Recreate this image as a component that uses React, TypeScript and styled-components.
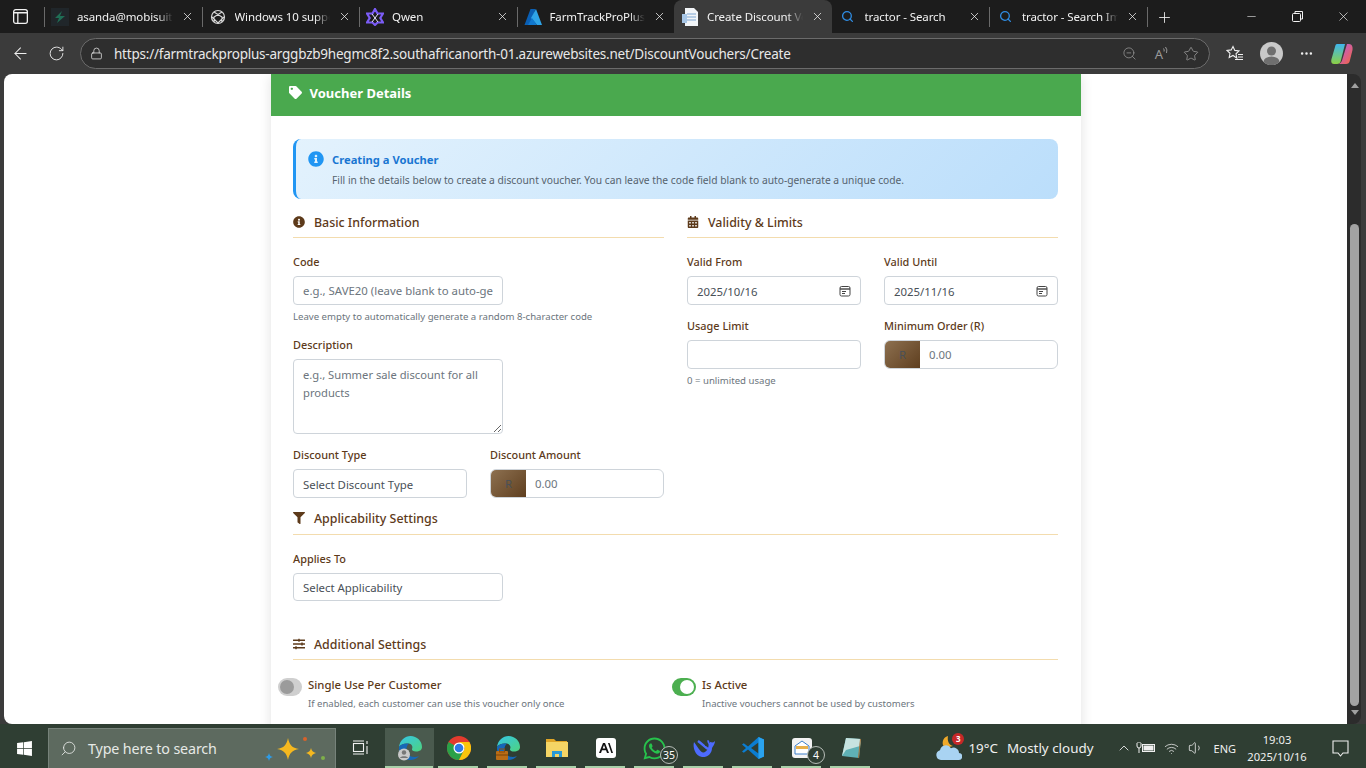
import React from 'react';
import styled, { createGlobalStyle } from 'styled-components';
import {
  FaTag,
  FaInfoCircle,
  FaCalendarAlt,
  FaFilter,
  FaSlidersH,
  FaWhatsapp,
  FaWindows,
} from 'react-icons/fa';
import {
  ArrowLeft,
  RotateCw,
  Lock,
  ZoomOut,
  Star,
  X,
  Plus,
  Minus,
  Search,
  ChevronUp,
  Wifi,
  Volume1,
  MoreHorizontal,
} from 'lucide-react';

const FONT = '"Noto Sans", "Open Sans", sans-serif';
const BROWN = '#5d3a1a';

const GlobalStyle = createGlobalStyle`
  html, body {
    margin: 0;
    padding: 0;
    width: 100%;
    height: 100%;
    overflow: hidden;
    background: #3b3b3b;
    font-family: ${FONT};
  }
  * { box-sizing: border-box; }
  input::placeholder, textarea::placeholder { color: #6c757d; opacity: 1; }
`;

const Screen = styled.div`
  width: 1366px;
  height: 768px;
  display: flex;
  flex-direction: column;
  overflow: hidden;
`;

/* ---- browser tabs ---- */

const TabStrip = styled.div`
  height: 33px;
  flex: none;
  display: flex;
  align-items: stretch;
  background: #1c1c1c;
  color: #f2f2f2;
`;

const SidebarButton = styled.div`
  width: 44px;
  padding-right: 4px;
  display: flex;
  align-items: center;
  justify-content: center;
`;

const Tab = styled.div<{ $active?: boolean; $sep?: boolean }>`
  width: 157.5px;
  display: flex;
  align-items: center;
  padding: 0 8px 0 7px;
  gap: 8px;
  font-size: 11.5px;
  letter-spacing: -0.1px;
  position: relative;
  background: ${(p) => (p.$active ? '#3b3b3b' : 'transparent')};
  border-radius: ${(p) => (p.$active ? '8px 8px 0 0' : '0')};
  &::before {
    content: '';
    display: ${(p) => (p.$sep ? 'block' : 'none')};
    position: absolute;
    left: 0;
    top: 7px;
    bottom: 6px;
    width: 1px;
    background: #6a6a6a;
  }
`;

const TabFavicon = styled.span`
  width: 18px;
  height: 18px;
  flex: none;
  display: flex;
  align-items: center;
  justify-content: center;
`;

const TabTitle = styled.span`
  flex: 1;
  min-width: 0;
  white-space: nowrap;
  overflow: hidden;
  -webkit-mask-image: linear-gradient(90deg, #000 84%, transparent 100%);
  mask-image: linear-gradient(90deg, #000 84%, transparent 100%);
`;

const NewTab = styled.div`
  width: 34px;
  display: flex;
  align-items: center;
  justify-content: center;
  border-left: 1px solid #6a6a6a;
  margin: 7px 0 6px;
`;

const WindowButtons = styled.div`
  margin-left: auto;
  display: flex;
  align-items: center;
`;

const WindowButton = styled.div`
  width: 46px;
  height: 33px;
  display: flex;
  align-items: center;
  justify-content: center;
`;

/* ---- address bar ---- */

const Toolbar = styled.div`
  height: 41px;
  flex: none;
  display: flex;
  align-items: center;
  background: #3b3b3b;
  color: #efefef;
  padding-left: 2px;
`;

const NavButton = styled.div`
  width: 36px;
  height: 32px;
  display: flex;
  align-items: center;
  justify-content: center;
  flex: none;
`;

const AddressBox = styled.div`
  width: 1130px;
  height: 31px;
  margin-left: 6px;
  flex: none;
  border: 1px solid #6b6b6b;
  border-radius: 16px;
  background: #2e2e2e;
  display: flex;
  align-items: center;
  padding: 0 10px 0 9px;
  font-size: 13.5px;
  letter-spacing: -0.225px;
  color: #e8e8e8;
`;

const Url = styled.span`
  margin-left: 11px;
  flex: 1;
  white-space: nowrap;
`;

const AddressTools = styled.div`
  display: flex;
  align-items: center;
  gap: 14px;
  color: #9a9a9a;
`;

const ReadAloud = styled.span`
  display: flex;
  align-items: flex-start;
  margin-left: 4px;
  font-size: 13px;
  line-height: 16px;
  letter-spacing: 0;
`;

const Avatar = styled.div`
  width: 23px;
  height: 23px;
  border-radius: 50%;
  background: #c9c9c9;
  overflow: hidden;
  display: flex;
  align-items: center;
  justify-content: center;
`;

const ToolbarRight = styled.div`
  display: flex;
  align-items: center;
  gap: 16px;
  margin-left: 16px;
`;

/* ---- page ---- */

const Middle = styled.div`
  flex: 1;
  min-height: 0;
  display: flex;
  background: #3b3b3b;
  padding-left: 4px;
`;

const Viewport = styled.div`
  width: 1343px;
  background: #fff;
  border-radius: 8px 0 0 8px;
  overflow: hidden;
  display: flex;
  justify-content: center;
`;

const ScrollTrack = styled.div`
  width: 14px;
  background: #2c2c2c;
  border-radius: 0 8px 8px 0;
  display: flex;
  flex-direction: column;
  align-items: center;
  padding: 9px 0 0 1px;
`;

const ScrollArrow = styled.div<{ $down?: boolean }>`
  width: 0;
  height: 0;
  flex: none;
  border-left: 4.5px solid transparent;
  border-right: 4.5px solid transparent;
  ${(p) => (p.$down ? 'border-top: 5px solid #a0a0a0;' : 'border-bottom: 5px solid #a0a0a0;')}
`;

const ScrollThumb = styled.div`
  width: 9px;
  height: 482px;
  margin: 136px 0 4px;
  flex: none;
  border-radius: 5px;
  background: #a3a3a3;
`;

const Card = styled.div`
  width: 810px;
  flex: none;
  align-self: flex-start;
  background: #fff;
  box-shadow: 0 2px 12px rgba(0, 0, 0, 0.12);
`;

const CardHeader = styled.div`
  height: 42px;
  background: #4aa94e;
  color: #fff;
  display: flex;
  align-items: center;
  gap: 8px;
  padding: 0 0 5px 18px;
  font-size: 13px;
  font-weight: 700;
`;

const CardBody = styled.div`
  padding: 23px 22.5px 60px 22.5px;
`;

const Alert = styled.div`
  height: 60px;
  border-left: 3px solid #2196f3;
  border-radius: 8px;
  background: linear-gradient(135deg, #e3f2fd, #bbdefb);
  display: flex;
  gap: 8px;
  padding: 12px 12px;
  color: #2196f3;
`;

const AlertTitle = styled.div`
  font-size: 11.2px;
  font-weight: 700;
  color: #1976d2;
  line-height: 17px;
  margin-bottom: 5px;
`;

const AlertText = styled.div`
  font-size: 10.25px;
  color: #56636e;
  line-height: 15px;
`;

const Columns = styled.div`
  display: grid;
  grid-template-columns: 371px 371px;
  column-gap: 23px;
`;

const SectionHead = styled.div<{ $pad?: number }>`
  height: 29px;
  display: flex;
  align-items: center;
  gap: 9px;
  border-bottom: 1px solid #f3dcae;
  color: ${BROWN};
  font-size: 12.4px;
  font-weight: 500;
  padding-bottom: ${(p) => p.$pad ?? 2}px;
`;

const Section = styled.div<{ $top: number }>`
  margin-top: ${(p) => p.$top}px;
`;

const Fields = styled.div`
  padding-top: 16px;
`;

const Row = styled.div`
  display: grid;
  grid-template-columns: 174px 174px;
  column-gap: 23px;
`;

const Field = styled.div<{ $bottom?: number }>`
  margin-bottom: ${(p) => p.$bottom ?? 0}px;
`;

const Label = styled.div`
  font-size: 10.9px;
  font-weight: 500;
  color: ${BROWN};
  line-height: 16px;
  height: 16px;
  margin-bottom: 6px;
`;

const TextInput = styled.input<{ $w?: number }>`
  display: block;
  width: ${(p) => (p.$w ? `${p.$w}px` : '100%')};
  height: 29px;
  border: 1px solid #ced4da;
  border-radius: 4px;
  background: #fff;
  padding: 0 9px;
  font-family: ${FONT};
  font-size: 11.4px;
  color: #495057;
  outline: none;
`;

const FakeInput = styled.div<{ $w?: number; $h?: number }>`
  width: ${(p) => (p.$w ? `${p.$w}px` : '100%')};
  height: ${(p) => p.$h ?? 29}px;
  border: 1px solid #ced4da;
  border-radius: 4px;
  background: #fff;
  padding: 1px 9px 0;
  font-size: 11.4px;
  color: #495057;
  display: flex;
  align-items: center;
  justify-content: space-between;
`;

const TextArea = styled.textarea`
  display: block;
  width: 210px;
  height: 75px;
  border: 1px solid #ced4da;
  border-radius: 4px;
  padding: 6px 9px;
  font-family: ${FONT};
  font-size: 11.2px;
  line-height: 18px;
  color: #495057;
  outline: none;
`;

const Help = styled.div`
  font-size: 9.6px;
  color: #6c757d;
  line-height: 13px;
  margin-top: 5px;
`;

const InputGroup = styled.div`
  display: flex;
  height: 29px;
  border: 1px solid #ced4da;
  border-radius: 6px;
  overflow: hidden;
  background: #fff;
`;

const Addon = styled.div`
  width: 35px;
  flex: none;
  background: linear-gradient(135deg, #8d7050, #5f3f1f);
  color: #495057;
  display: flex;
  align-items: center;
  justify-content: center;
  font-size: 11.4px;
`;

const AddonValue = styled.div`
  padding: 0 0 1px 9px;
  display: flex;
  align-items: center;
  font-size: 11.4px;
  color: #6c757d;
`;

const SwitchRow = styled.div`
  display: flex;
  gap: 6px;
  margin-left: -15px;
`;

const SwitchTrack = styled.div<{ $on?: boolean }>`
  width: 24px;
  height: 18px;
  flex: none;
  margin-top: 1px;
  border-radius: 9px;
  background: ${(p) => (p.$on ? '#4caf50' : '#cfcfcf')};
  display: flex;
  align-items: center;
  justify-content: ${(p) => (p.$on ? 'flex-end' : 'flex-start')};
  padding: 0 2px;
`;

const SwitchKnob = styled.div<{ $on?: boolean }>`
  width: 14px;
  height: 14px;
  border-radius: 50%;
  background: ${(p) => (p.$on ? '#fff' : '#9b9b9b')};
`;

const SwitchTitle = styled.div`
  font-size: 11.35px;
  font-weight: 500;
  color: ${BROWN};
  line-height: 16px;
  margin-bottom: 4px;
`;

const SwitchHelp = styled.div`
  font-size: 9.55px;
  color: #6c757d;
  line-height: 13px;
`;

/* ---- taskbar ---- */

const Taskbar = styled.div`
  height: 44px;
  flex: none;
  background: #2f3e33;
  display: flex;
  align-items: stretch;
  color: #f0f0f0;
`;

const StartButton = styled.div`
  width: 48px;
  padding-top: 4px;
  display: flex;
  align-items: center;
  justify-content: center;
`;

const SearchBox = styled.div`
  width: 288px;
  margin-top: 4px;
  background: #5d6a5f;
  border: 1px solid #76827a;
  border-bottom: none;
  display: flex;
  align-items: center;
  padding: 0 5px 0 11px;
  font-size: 14.3px;
  letter-spacing: -0.15px;
  color: #e6e9e6;
`;

const SearchText = styled.span`
  margin-left: 11px;
  flex: 1;
  white-space: nowrap;
`;

const TaskItem = styled.div<{ $active?: boolean; $open?: boolean }>`
  width: 49px;
  margin-top: 4px;
  display: flex;
  align-items: center;
  justify-content: center;
  position: relative;
  background: ${(p) => (p.$active ? '#4a5a4e' : 'transparent')};
  &::after {
    content: '';
    display: ${(p) => (p.$open ? 'block' : 'none')};
    position: absolute;
    bottom: 0;
    left: ${(p) => (p.$active ? 0 : 4)}px;
    right: ${(p) => (p.$active ? 1 : 5)}px;
    height: 2px;
    background: #a9d0a9;
  }
`;

const CountBadge = styled.span`
  position: absolute;
  right: 1px;
  bottom: 4px;
  width: 18px;
  height: 18px;
  border-radius: 50%;
  border: 1px solid #b7bdb8;
  background: #2f3e33;
  color: #fff;
  font-size: 10.5px;
  line-height: 16px;
  text-align: center;
`;

const Tray = styled.div`
  margin-left: auto;
  display: flex;
  align-items: center;
  padding-top: 4px;
`;

const WeatherWrap = styled.div`
  width: 26px;
  height: 26px;
  position: relative;
`;

const WeatherBadge = styled.span`
  position: absolute;
  right: -2px;
  top: -2px;
  width: 12px;
  height: 12px;
  border-radius: 50%;
  background: #c62828;
  color: #fff;
  font-size: 8px;
  font-weight: 700;
  line-height: 12px;
  text-align: center;
`;

const TrayText = styled.span<{ $ml: number; $size?: number }>`
  margin-left: ${(p) => p.$ml}px;
  font-size: ${(p) => p.$size ?? 13.4}px;
  white-space: nowrap;
`;

const TrayIcon = styled.div<{ $ml: number }>`
  margin-left: ${(p) => p.$ml}px;
  display: flex;
  align-items: center;
`;

const Clock = styled.div`
  width: 74px;
  margin-left: 4px;
  text-align: center;
  font-size: 11.2px;
  line-height: 17px;
`;

const Notify = styled.div`
  width: 52px;
  display: flex;
  justify-content: center;
`;

/* ---- drawn logos ---- */

const EdgeLogo = ({ badge }: { badge?: 'user' | 'work' }) => (
  <svg width="26" height="26" viewBox="0 0 26 26">
    <defs>
      <linearGradient id="edgeA" x1="0" y1="0" x2="1" y2="1">
        <stop offset="0" stopColor="#34c6e8" />
        <stop offset="1" stopColor="#4ed37e" />
      </linearGradient>
    </defs>
    <path d="M2 12C3 5 8 1 13.5 1 20 1 25 6 25 12c0 3-2.500 4.500-6 4.500-2.500 0-4.500-1-4-2.500 1-1.500.5-5-3.500-5.500C7 8 3.500 9.500 2 12z" fill="url(#edgeA)" />
    <path d="M2 12c-.5 7 4.500 13 11 13 4 0 7-1.500 9-4-3 1.500-8 1.500-10.500-1.500C8.500 16 9 11 12 8.500 7 8 3.500 9.500 2 12z" fill="#1668b8" />
    {badge === 'user' && (
      <g>
        <circle cx="7" cy="19.500" r="6" fill="#c9c9c9" />
        <circle cx="7" cy="17.500" r="2.200" fill="#777" />
        <path d="M3 23c.5-2.500 7.500-2.500 8 0z" fill="#777" />
      </g>
    )}
    {badge === 'work' && (
      <g>
        <rect x="1" y="16" width="12" height="9" rx="1" fill="#b96d17" />
        <rect x="4.500" y="14" width="5" height="3" fill="none" stroke="#8a4f0e" />
        <rect x="1" y="19.500" width="12" height="1" fill="#7a4408" />
      </g>
    )}
  </svg>
);

const ChromeLogo = () => (
  <svg width="24" height="24" viewBox="0 0 24 24">
    <circle cx="12" cy="12" r="12" fill="#e33b2e" />
    <path d="M12 12L1.600 6A12 12 0 0 0 12 24l6-12z" fill="#2aa148" />
    <path d="M12 24A12 12 0 0 0 22.400 6H12l6 6z" fill="#fbc50c" />
    <circle cx="12" cy="12" r="5.500" fill="#fff" />
    <circle cx="12" cy="12" r="4.300" fill="#2f79e8" />
  </svg>
);

const FolderLogo = () => (
  <svg width="22" height="20" viewBox="0 0 22 20">
    <path d="M0 1h8l2 2h11v3H0z" fill="#e0a526" />
    <rect y="4" width="22" height="15" fill="#f5d565" />
    <path d="M6 19v-6h10v6h-3v-3H9v3z" fill="#2a9ad6" />
  </svg>
);

const ClaudeLike = () => (
  <svg width="20" height="20" viewBox="0 0 20 20">
    <rect width="20" height="20" rx="3" fill="#fff" />
    <path d="M3 15L7 5h2l4 10h-2l-1-2.800H6L5 15zM6.700 10.500h2.600L8 7zM12 5h1.600l3.400 10h-1.700z" fill="#111" />
  </svg>
);

const WhaleLogo = () => (
  <svg width="24" height="22" viewBox="0 0 24 22">
    <path
      d="M23 4c-1 1-2 1.500-3 1.500-1-1-2-.5-3 .5 1-2-.5-3-1.500-3-.5 1 0 3 1 4 .5 4-2 8-5 8.500C9 16 5 9 2 5 .5 10 3 19 10 20c5 .5 10-3 10-9 1-2 3-4 3-7z"
      fill="#4d6bfe"
    />
    <path d="M6 4c3 2 8 7 10 8" stroke="#4d6bfe" strokeWidth="2.500" fill="none" />
    <circle cx="14" cy="8" r="1" fill="#2f3e33" />
  </svg>
);

const VsCodeLogo = () => (
  <svg width="24" height="24" viewBox="0 0 24 24">
    <path d="M17.500 1L23 3.500v17L17.500 23 7 13.500 2.800 16.700 1 15.500 5 12 1 8.500l1.800-1.200L7 10.500z" fill="#0b7dd1" />
    <path d="M17.500 6.500L10 12l7.500 5.500z" fill="#2f3e33" />
    <path d="M17.500 1L23 3.500v17L17.500 23z" fill="#2aa3ef" />
  </svg>
);

const MailLogo = () => (
  <svg width="20" height="20" viewBox="0 0 20 20">
    <rect width="20" height="20" rx="3" fill="#f3f3f3" />
    <path d="M3 8l7-5 7 5v8H3z" fill="#fff" stroke="#3c7fc9" />
    <rect x="4" y="8" width="12" height="3" fill="#e8b04a" />
  </svg>
);

const NotepadLogo = () => (
  <svg width="24" height="24" viewBox="0 0 24 24">
    <path d="M7 2l15 1-2 19L3 20z" fill="#5fb1b5" />
    <path d="M7 2l15 1-1 7L7 14 3 20z" fill="#c7e3e0" />
    <path d="M22 3l-2 19-1-.2 2-18.800z" fill="#a2723a" />
  </svg>
);

const CloudMoon = () => (
  <svg width="26" height="26" viewBox="0 0 26 26">
    <path d="M12 1a7 7 0 0 0-3 12l8-2C13 10 11 6 12 1z" fill="#f0a92a" />
    <path d="M5 25a5 5 0 0 1-1-9.800 6 6 0 0 1 11-2 5.500 5.500 0 0 1 8 4.800 3.500 3.500 0 0 1-.5 7z" fill="#a9d3f2" />
  </svg>
);

const AzureLogo = () => (
  <svg width="18" height="16" viewBox="0 0 18 16">
    <path d="M6.500 0h5L6 16H.5z" fill="#0a5fb4" />
    <path d="M12 0l6 16h-5L7 9z" fill="#2ea4e8" />
    <path d="M8 9l5 7H4z" fill="#1078cf" />
  </svg>
);

const QwenLogo = () => (
  <svg width="18" height="18" viewBox="0 0 18 18">
    <path d="M9 1l2.500 4.500H17l-2.700 4.500L17 14.500h-5.500L9 17l-2.500-2.500H1L3.700 10 1 5.500h5.500z" fill="none" stroke="#7b5cf5" strokeWidth="2.200" />
    <path d="M6 6l6 8M12 6l-6 8" stroke="#e8e4ff" strokeWidth="1" />
  </svg>
);

const OpenAiKnot = () => (
  <svg width="16" height="16" viewBox="0 0 16 16" fill="none" stroke="#d8d8d8" strokeWidth="1.200">
    <circle cx="8" cy="8" r="6.500" />
    <path d="M4 3l8 5v5M12 3L4 8v5M2 8l6 6 6-6" />
  </svg>
);

const Bolt = () => (
  <svg width="18" height="18" viewBox="0 0 18 18">
    <rect width="18" height="18" fill="#20262a" />
    <path d="M11 3L4 10h4l-2 5 8-7H9z" fill="#1f6e55" />
  </svg>
);

const DocIcon = () => (
  <svg width="17" height="18" viewBox="0 0 17 18">
    <path d="M3 0h9l4 4v14H3z" fill="#f2f5f8" />
    <path d="M5 6h9M5 9h9M5 12h9" stroke="#7ca5d1" />
    <rect y="6" width="5" height="9" fill="#a7c6e6" />
  </svg>
);

const Copilot = () => (
  <svg width="24" height="24" viewBox="0 0 24 24">
    <defs>
      <linearGradient id="copA" x1="0" y1="0" x2="0" y2="1">
        <stop offset="0" stopColor="#3fb6ee" />
        <stop offset="1" stopColor="#8ccf45" />
      </linearGradient>
      <linearGradient id="copB" x1="0" y1="0" x2="1" y2="1">
        <stop offset="0" stopColor="#b45be8" />
        <stop offset="1" stopColor="#f7663d" />
      </linearGradient>
    </defs>
    <path d="M7 2h8l-4 16c-.5 3-2 4-4 4H4C1 22 1 19 1.500 17L5 5c.4-2 1-3 2-3z" fill="url(#copA)" />
    <path d="M17 2h2c3 0 4 3 3.500 6L20 18c-.5 3-2 4-4 4H9c2-1 3-3 3.500-5z" fill="url(#copB)" />
  </svg>
);

const FavoritesGlyph = () => (
  <svg width="18" height="17" viewBox="0 0 18 17" fill="none" stroke="#efefef" strokeWidth="1.100">
    <path d="M7 1.500l1.800 3.900 4.200.5-3 2.900.8 4.200L7 10.500 3.200 12.500 4 8.300 1 5.400l4.200-.5z" />
    <path d="M12 9.500h5M12 12h5M9 14.500h8" />
  </svg>
);

const SoundArcs = () => (
  <svg width="6" height="10" viewBox="0 0 6 10" fill="none" stroke="#9a9a9a">
    <path d="M1 5.500a3 3 0 0 0-.5-3M3.500 7a6 6 0 0 0-1-6" />
  </svg>
);

const BatteryPlug = () => (
  <svg width="20" height="14" viewBox="0 0 20 14" fill="none" stroke="#f0f0f0">
    <rect x="6.500" y="3.500" width="12" height="7" />
    <rect x="8" y="5" width="9" height="4" fill="#f0f0f0" />
    <path d="M1 2v3a2 2 0 0 0 4 0V2M3 7v5M2 1v1M4 1v1" />
  </svg>
);

const NoteBubble = () => (
  <svg width="17" height="17" viewBox="0 0 17 17" fill="none" stroke="#f0f0f0" strokeWidth="1.100">
    <path d="M1 1h15v12h-5l-2.500 3L6 13H1z" />
  </svg>
);

const SparkleSet = () => (
  <svg width="72" height="34" viewBox="0 0 72 34">
    <path d="M30 6c1.500 7 4 10 11 11-7 1.500-9.500 4-11 11-1.500-7-4-9.500-11-11 7-1 9.500-4 11-11z" fill="#f5b81f" />
    <path d="M53 16c.7 3 2 4.300 5 5-3 .7-4.300 2-5 5-.7-3-2-4.300-5-5 3-.7 4.300-2 5-5z" fill="#f5b81f" />
    <path d="M11 21c.5 2.500 1.500 3.500 4 4-2.500.5-3.500 1.500-4 4-.5-2.500-1.500-3.500-4-4 2.500-.5 3.500-1.500 4-4z" fill="#2e9be6" />
    <circle cx="47" cy="7" r="2" fill="#d9622b" />
    <circle cx="65" cy="26" r="2" fill="#7fb04a" />
  </svg>
);

const tabs = [
  { title: 'asanda@mobisuite', icon: <Bolt /> },
  { title: 'Windows 10 support', icon: <OpenAiKnot /> },
  { title: 'Qwen', icon: <QwenLogo /> },
  { title: 'FarmTrackProPlus', icon: <AzureLogo /> },
  { title: 'Create Discount Voucher', icon: <DocIcon />, active: true },
  { title: 'tractor - Search', icon: <Search size={13} color="#2f8de4" strokeWidth={2.4} /> },
  { title: 'tractor - Search Images', icon: <Search size={13} color="#2f8de4" strokeWidth={2.4} />, sep: true },
];

const App: React.FC = () => {
  return (
    <Screen>
      <GlobalStyle />

      <TabStrip>
        <SidebarButton>
          <svg width="15" height="15" viewBox="0 0 14 14" fill="none" stroke="#f2f2f2" strokeWidth="1.200">
            <rect x="0.600" y="0.600" width="12.800" height="12.800" rx="2" />
            <path d="M0.600 3.500h12.800M4.500 3.500v9.900" />
          </svg>
        </SidebarButton>
        {tabs.map((tab, i) => (
          <Tab key={tab.title} $active={tab.active} $sep={i < 4 || tab.sep}>
            <TabFavicon>{tab.icon}</TabFavicon>
            <TabTitle>{tab.title}</TabTitle>
            <X size={13} strokeWidth={1.4} />
          </Tab>
        ))}
        <NewTab>
          <Plus size={17} strokeWidth={1.2} />
        </NewTab>
        <WindowButtons>
          <WindowButton>
            <Minus size={13} strokeWidth={1.1} />
          </WindowButton>
          <WindowButton>
            <svg width="11" height="11" viewBox="0 0 11 11" fill="none" stroke="#f2f2f2">
              <rect x="0.500" y="2.500" width="8" height="8" rx="1" />
              <path d="M3 2.500V.5h7.500V8H8.500" />
            </svg>
          </WindowButton>
          <WindowButton>
            <X size={15} strokeWidth={1.1} />
          </WindowButton>
        </WindowButtons>
      </TabStrip>

      <Toolbar>
        <NavButton>
          <ArrowLeft size={19} strokeWidth={1.3} />
        </NavButton>
        <NavButton>
          <RotateCw size={17} strokeWidth={1.3} />
        </NavButton>
        <AddressBox>
          <Lock size={13} strokeWidth={1.4} />
          <Url>https://farmtrackproplus-arggbzb9hegmc8f2.southafricanorth-01.azurewebsites.net/DiscountVouchers/Create</Url>
          <AddressTools>
            <ZoomOut size={15} strokeWidth={1.2} />
            <ReadAloud>
              A
              <SoundArcs />
            </ReadAloud>
            <Star size={16} strokeWidth={1.2} />
          </AddressTools>
        </AddressBox>
        <ToolbarRight>
          <FavoritesGlyph />
          <Avatar>
            <svg width="23" height="23" viewBox="0 0 23 23">
              <circle cx="11.500" cy="9" r="4.500" fill="#6f6f6f" />
              <ellipse cx="11.500" cy="20" rx="8" ry="5.500" fill="#6f6f6f" />
            </svg>
          </Avatar>
          <MoreHorizontal size={15} strokeWidth={2} />
          <Copilot />
        </ToolbarRight>
      </Toolbar>

      <Middle>
        <Viewport>
          <Card>
            <CardHeader>
              <FaTag size={13} />
              Voucher Details
            </CardHeader>
            <CardBody>
              <Alert>
                <FaInfoCircle size={16} style={{ flex: 'none' }} />
                <div>
                  <AlertTitle>Creating a Voucher</AlertTitle>
                  <AlertText>
                    Fill in the details below to create a discount voucher. You can leave the code field blank to auto-generate a unique code.
                  </AlertText>
                </div>
              </Alert>

              <Columns>
                <Section $top={10}>
                  <SectionHead>
                    <FaInfoCircle size={12} />
                    Basic Information
                  </SectionHead>
                  <Fields>
                    <Field $bottom={14}>
                      <Label>Code</Label>
                      <TextInput $w={210} placeholder="e.g., SAVE20 (leave blank to auto-generate)" />
                      <Help>Leave empty to automatically generate a random 8-character code</Help>
                    </Field>
                    <Field $bottom={13}>
                      <Label>Description</Label>
                      <TextArea placeholder="e.g., Summer sale discount for all products" />
                    </Field>
                    <Row>
                      <Field>
                        <Label>Discount Type</Label>
                        <FakeInput>Select Discount Type</FakeInput>
                      </Field>
                      <Field>
                        <Label>Discount Amount</Label>
                        <InputGroup>
                          <Addon>R</Addon>
                          <AddonValue>0.00</AddonValue>
                        </InputGroup>
                      </Field>
                    </Row>
                  </Fields>
                </Section>

                <Section $top={10}>
                  <SectionHead>
                    <FaCalendarAlt size={12} />
                    Validity &amp; Limits
                  </SectionHead>
                  <Fields>
                    <Row>
                      <Field $bottom={13}>
                        <Label>Valid From</Label>
                        <FakeInput>
                          2025/10/16
                          <CalendarGlyph />
                        </FakeInput>
                      </Field>
                      <Field $bottom={13}>
                        <Label>Valid Until</Label>
                        <FakeInput>
                          2025/11/16
                          <CalendarGlyph />
                        </FakeInput>
                      </Field>
                      <Field>
                        <Label>Usage Limit</Label>
                        <TextInput />
                        <Help>0 = unlimited usage</Help>
                      </Field>
                      <Field>
                        <Label>Minimum Order (R)</Label>
                        <InputGroup>
                          <Addon>R</Addon>
                          <AddonValue>0.00</AddonValue>
                        </InputGroup>
                      </Field>
                    </Row>
                  </Fields>
                </Section>
              </Columns>

              <Section $top={8}>
                <SectionHead $pad={4}>
                  <FaFilter size={12} />
                  Applicability Settings
                </SectionHead>
                <Fields>
                  <Label>Applies To</Label>
                  <FakeInput $w={210} $h={28}>Select Applicability</FakeInput>
                </Fields>
              </Section>

              <Section $top={30}>
                <SectionHead>
                  <FaSlidersH size={12} />
                  Additional Settings
                </SectionHead>
                <Columns>
                  <SwitchBlock title="Single Use Per Customer" help="If enabled, each customer can use this voucher only once" />
                  <SwitchBlock on title="Is Active" help="Inactive vouchers cannot be used by customers" />
                </Columns>
              </Section>
            </CardBody>
          </Card>
        </Viewport>
        <ScrollTrack>
          <ScrollArrow />
          <ScrollThumb />
          <ScrollArrow $down />
        </ScrollTrack>
      </Middle>

      <Taskbar>
        <StartButton>
          <FaWindows size={17} color="#fff" />
        </StartButton>
        <SearchBox>
          <Search size={17} strokeWidth={1.2} style={{ transform: 'scaleX(-1)' }} />
          <SearchText>Type here to search</SearchText>
          <SparkleSet />
        </SearchBox>
        <TaskItem>
          <svg width="17" height="17" viewBox="0 0 17 17" fill="none" stroke="#f0f0f0" strokeWidth="1.100">
            <rect x="1.500" y="3.500" width="10" height="8" />
            <path d="M1 1h11M1 14h11M15 1v3M15 6v8" />
          </svg>
        </TaskItem>
        <TaskItem $active $open><EdgeLogo badge="user" /></TaskItem>
        <TaskItem $open><ChromeLogo /></TaskItem>
        <TaskItem $open><EdgeLogo badge="work" /></TaskItem>
        <TaskItem $open><FolderLogo /></TaskItem>
        <TaskItem $open><ClaudeLike /></TaskItem>
        <TaskItem $open>
          <FaWhatsapp size={25} color="#27c24c" />
          <CountBadge>35</CountBadge>
        </TaskItem>
        <TaskItem $open><WhaleLogo /></TaskItem>
        <TaskItem $open><VsCodeLogo /></TaskItem>
        <TaskItem $open>
          <MailLogo />
          <CountBadge>4</CountBadge>
        </TaskItem>
        <TaskItem $open><NotepadLogo /></TaskItem>
        <Tray>
          <WeatherWrap>
            <CloudMoon />
            <WeatherBadge>3</WeatherBadge>
          </WeatherWrap>
          <TrayText $ml={6}>19°C</TrayText>
          <TrayText $ml={9}>Mostly cloudy</TrayText>
          <TrayIcon $ml={22}><ChevronUp size={16} strokeWidth={1.3} /></TrayIcon>
          <TrayIcon $ml={4}><BatteryPlug /></TrayIcon>
          <TrayIcon $ml={8}><Wifi size={15} strokeWidth={1.2} /></TrayIcon>
          <TrayIcon $ml={9}><Volume1 size={16} strokeWidth={1.2} /></TrayIcon>
          <TrayText $ml={10} $size={11}>ENG</TrayText>
          <Clock>
            <div>19:03</div>
            <div>2025/10/16</div>
          </Clock>
          <Notify><NoteBubble /></Notify>
        </Tray>
      </Taskbar>
    </Screen>
  );
};

function CalendarGlyph() {
  return (
    <svg width="12" height="12" viewBox="0 0 12 12" fill="none" stroke="#444">
      <rect x="1" y="1.500" width="10" height="9.500" rx="1.500" />
      <path d="M1 4h10" strokeWidth="1.400" />
      <path d="M3 6.500h4M3 8.500h3" />
    </svg>
  );
}

function SwitchBlock({ on, title, help }: { on?: boolean; title: string; help: string }) {
  return (
    <Section $top={17}>
      <SwitchRow>
        <SwitchTrack $on={on}>
          <SwitchKnob $on={on} />
        </SwitchTrack>
        <div>
          <SwitchTitle>{title}</SwitchTitle>
          <SwitchHelp>{help}</SwitchHelp>
        </div>
      </SwitchRow>
    </Section>
  );
}

export default App;
